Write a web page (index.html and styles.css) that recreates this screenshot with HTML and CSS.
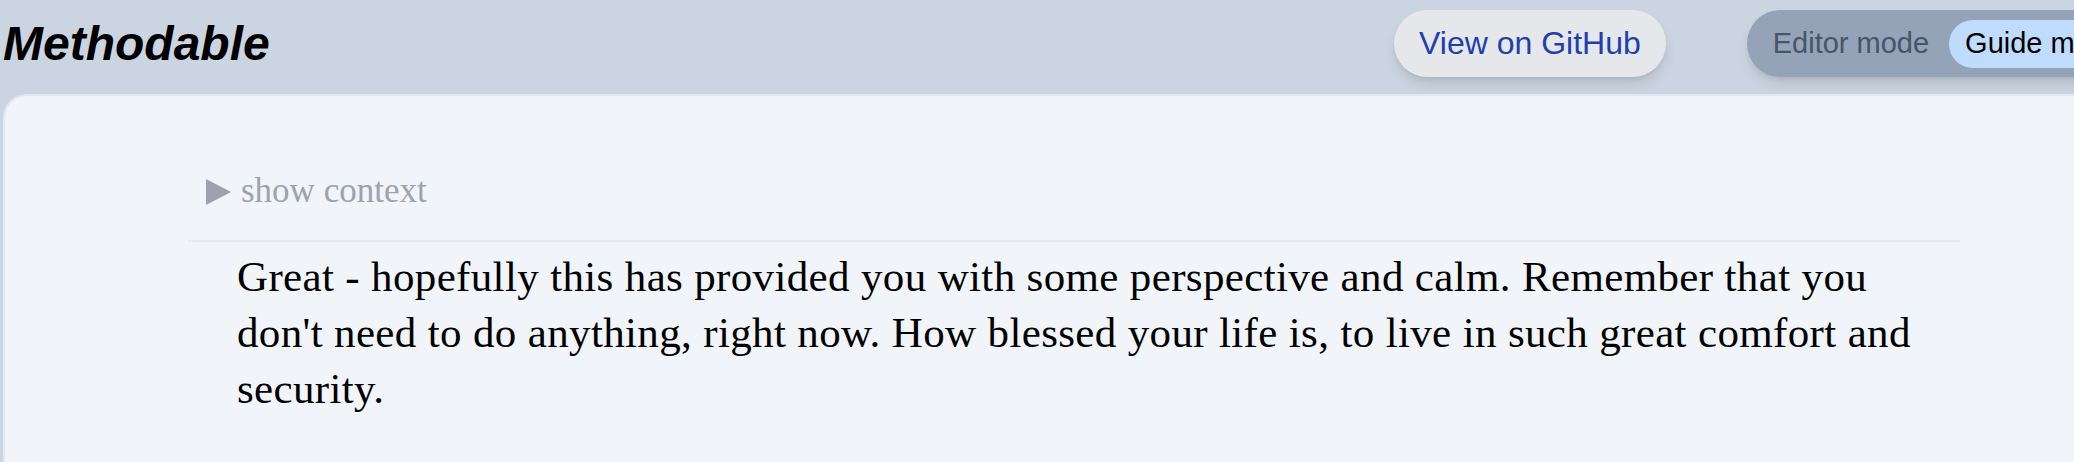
FILE: index.html
```html
<!DOCTYPE html>
<html lang="en">
<head>
    <meta charset="UTF-8">
    <meta name="viewport" content="width=device-width, initial-scale=1.0">
    <title>Methodable</title>
    <link rel="stylesheet" href="styles.css">
</head>
<body>
<div class="page">
    <header class="topbar">
        <div class="brand">Methodable</div>
        <div class="actions">
            <a class="btn-github" href="#">View on GitHub</a>
            <div class="mode-toggle">
                <span class="mode-option">Editor mode</span>
                <span class="mode-option active">Guide mode</span>
            </div>
        </div>
    </header>

    <main class="card">
        <div class="step">
            <details class="context">
                <summary>
                    <svg class="caret" width="25" height="26" viewBox="0 0 25 26">
                        <polygon points="0,0 25,13 0,26" fill="currentColor"/>
                    </svg>
                    show context
                </summary>
            </details>
            <div class="divider"></div>
            <p class="step-text">Great - hopefully this has provided you with some perspective and calm. Remember that you don't need to do anything, right now. How blessed your life is, to live in such great comfort and security.</p>
        </div>
    </main>
</div>
</body>
</html>
```

FILE: styles.css
```css
html, body {
    margin: 0;
    padding: 0;
    overflow: hidden;
}

body {
    background-color: #cbd5e1;
    font-family: "Liberation Sans", Arial, sans-serif;
    height: 462px;
}

/* page is wider than the window, the mode toggle runs off the right edge */
.page {
    width: 2148px;
    padding: 0 3px;
    box-sizing: border-box;
}

.topbar {
    display: grid;
    grid-template-columns: 1391px auto;
    align-items: center;
    height: 87px;
}

.brand {
    font-size: 48px;
    line-height: 48px;
    font-weight: bold;
    font-style: italic;
    color: #000;
}

.actions {
    display: flex;
    align-items: center;
    gap: 81px;
}

.btn-github {
    display: flex;
    align-items: center;
    height: 67px;
    padding: 0 25px;
    box-sizing: border-box;
    background-color: #e5e7eb;
    color: #1e40af;
    font-size: 32px;
    white-space: nowrap;
    text-decoration: none;
    border-radius: 34px;
    box-shadow: 0 8px 14px -2px rgba(0, 0, 0, 0.12), 0 3px 6px -3px rgba(0, 0, 0, 0.1);
}

.mode-toggle {
    display: flex;
    align-items: center;
    gap: 4px;
    height: 67px;
    padding: 0 10px;
    box-sizing: border-box;
    background-color: #94a3b8;
    border-radius: 34px;
    box-shadow: 0 8px 14px -2px rgba(0, 0, 0, 0.12), 0 3px 6px -3px rgba(0, 0, 0, 0.1);
}

.mode-option {
    display: flex;
    align-items: center;
    height: 48px;
    padding: 0 16px;
    font-size: 29px;
    color: #475569;
    border-radius: 24px;
    white-space: nowrap;
}

.mode-option.active {
    background-color: #bfdbfe;
    color: #000;
}

.card {
    margin-top: 7px;
    width: 2142px;
    min-height: 400px;
    background-color: #f1f5f9;
    border: 2px solid #e2e8f0;
    border-radius: 24px;
    box-sizing: border-box;
}

.step {
    padding: 71px 0 0 183px;
    font-family: "Liberation Serif", "Times New Roman", serif;
}

.context summary {
    display: flex;
    align-items: center;
    gap: 10px;
    margin-left: 18px;
    list-style: none;
    font-size: 35px;
    line-height: 48px;
    color: #9ca3af;
    cursor: pointer;
}

.context summary::-webkit-details-marker {
    display: none;
}

.caret {
    margin-top: 2px;
}

.divider {
    width: 1772px;
    height: 2px;
    margin-top: 25px;
    background-color: #e5e7eb;
}

.step-text {
    margin: 7px 0 0 49px;
    max-width: 1690px;
    font-size: 43px;
    letter-spacing: 0.35px;
    line-height: 56px;
    color: #000;
}
```
